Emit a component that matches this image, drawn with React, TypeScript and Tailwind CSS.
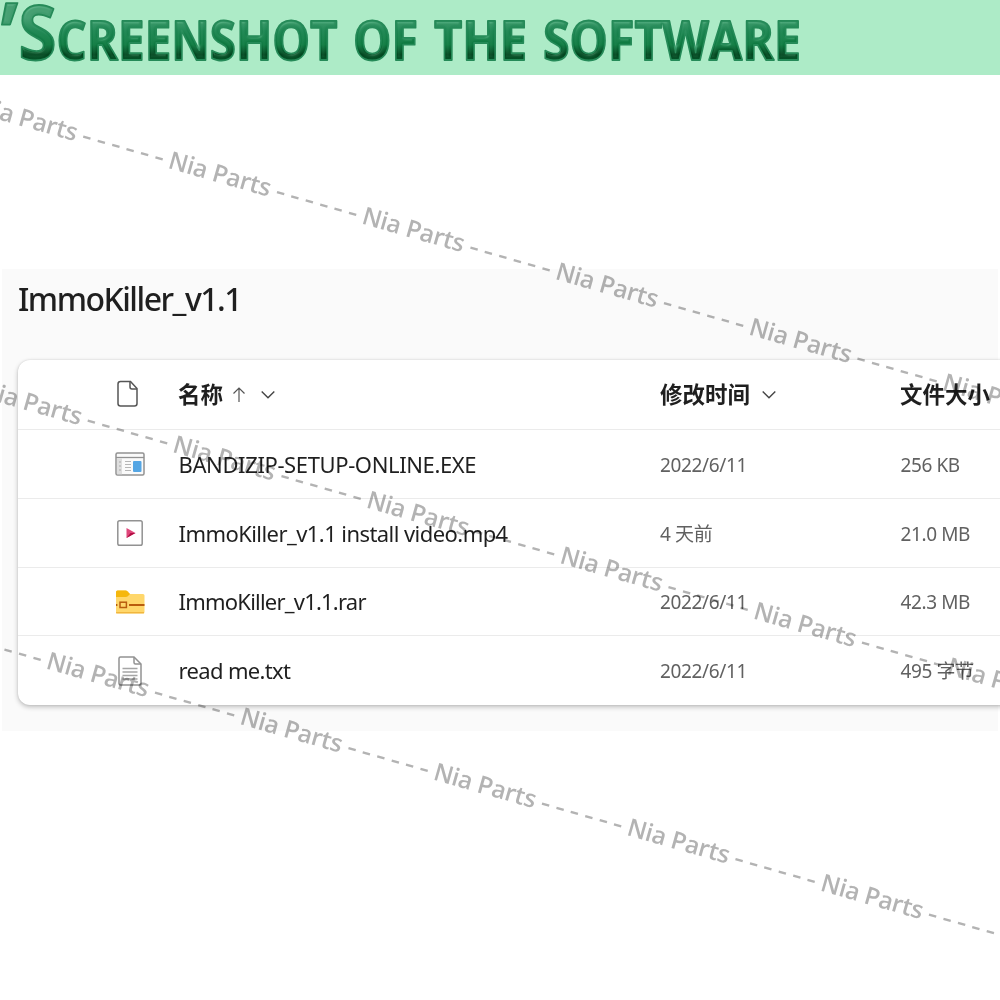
import React from "react";

const pitch = { x: 193.55, y: 55.5 };

const watermarkRows = [
  { x: -25.5, y: 112.5, count: 6 },
  { x: -21, y: 396.5, count: 6 },
  { x: -147.5, y: 613, count: 6 },
];

const titleWords = [
  { text: "S", x: 18.5, size: 76, width: 38 },
  { text: "CREENSHOT", x: 56.5, size: 54, width: 281 },
  { text: "OF", x: 353, size: 54, width: 65 },
  { text: "THE", x: 434, size: 54, width: 93 },
  { text: "SOFTWARE", x: 543, size: 54, width: 258 },
];

const files = [
  { name: "BANDIZIP-SETUP-ONLINE.EXE", date: "2022/6/11", size: "256 KB", icon: "exe", row: "h-[69px] border-b", track: "tracking-[-0.38px]" },
  { name: "ImmoKiller_v1.1 install video.mp4", date: "4 天前", size: "21.0 MB", icon: "video", row: "h-[69px] border-b", track: "tracking-[-0.56px]" },
  { name: "ImmoKiller_v1.1.rar", date: "2022/6/11", size: "42.3 MB", icon: "rar", row: "h-[68px] border-b", track: "tracking-[-0.78px]" },
  { name: "read me.txt", date: "2022/6/11", size: "495 字节", icon: "txt", row: "h-[69px]", track: "tracking-[-0.65px]" },
];

const FileIcon = ({ type }: { type: string }) => {
  if (type === "exe") {
    return (
      <svg width="30" height="24" viewBox="0 0 30 24" fill="none">
        <rect x="1" y="1" width="28" height="22" rx="1.5" fill="#fafafa" stroke="#929292" strokeWidth="1.5" />
        <path d="M1 5.5h28" stroke="#929292" strokeWidth="1.3" />
        <path d="M2 6.3h5v16H2z" fill="#dedede" />
        <path d="M4 10h2M4 14h2M4 18h2" stroke="#aaa" />
        <path d="M10 9.5h6M10 12.5h6M10 15.5h6M10 18.5h6" stroke="#b6b6b6" strokeWidth="1.2" />
        <rect x="18" y="9" width="8.5" height="11" rx="1" fill="#55a6e4" />
      </svg>
    );
  }
  if (type === "video") {
    return (
      <svg width="26" height="26" viewBox="0 0 26 26" fill="none">
        <rect x=".8" y=".8" width="24.4" height="24.4" rx="1.8" fill="#fff" stroke="#929292" strokeWidth="1.5" />
        <path d="M9.5 8v10l9-5z" fill="#df477b" />
        <path d="M9.5 18l9-5h-5z" fill="#b10e43" />
      </svg>
    );
  }
  if (type === "rar") {
    return (
      <svg width="30" height="24" viewBox="0 0 30 24" fill="none">
        <path d="M1 2q0-1.5 1.5-1.5h9L15 4h13q1.5 0 1.5 1.5V22q0 1.5-1.5 1.5H2.5Q1 23.5 1 22z" fill="#ffd76b" />
        <path d="M1 7V2Q1 .5 2.5.5h8q1 0 1.8.8L15 4l-2.2 2.2q-.8.8-2 .8z" fill="#f5b70d" />
        <path d="M1 22.8h28" stroke="#eba92c" />
        <path d="M1 15h1.4M14 15h15.5" stroke="#b95c0d" strokeWidth="2.2" />
        <rect x="5" y="12.2" width="6.4" height="5.3" stroke="#b95c0d" strokeWidth="1.5" />
      </svg>
    );
  }
  return (
    <svg width="24" height="30" viewBox="0 0 24 30" fill="none">
      <path d="M2.5 1H16l7 7v19.5q0 1.5-1.5 1.5h-19Q1 29 1 27.5v-25Q1 1 2.5 1z" fill="#fff" stroke="#929292" strokeWidth="1.5" />
      <path d="M16 1v5.5Q16 8 17.5 8H23" stroke="#929292" strokeWidth="1.5" />
      <path d="M4.5 12.5h15M4.5 16h15M4.5 19.5h15M4.5 23h15" stroke="#a5a5a5" strokeWidth="1.3" />
    </svg>
  );
};

const Chevron = () => (
  <svg width="16" height="10" viewBox="0 0 16 10" fill="none" stroke="#454545" strokeWidth="1.4">
    <path d="M1.7 1.5L8 7.8l6.3-6.3" />
  </svg>
);

const TitleComponent = () => (
  <header className="h-[75px] w-full bg-[#adebc7]">
    <svg width="1000" height="75" className="block font-['Open_Sans',sans-serif] font-bold">
      <defs>
        <linearGradient id="green" gradientUnits="userSpaceOnUse" x1="0" y1="18" x2="0" y2="61">
          <stop offset="0" stopColor="#409c6e" />
          <stop offset=".3" stopColor="#1b8450" />
          <stop offset=".62" stopColor="#0e7940" />
          <stop offset=".85" stopColor="#034720" />
          <stop offset="1" stopColor="#07572b" />
        </linearGradient>
        <filter id="bevel" x="-5%" y="-10%" width="110%" height="120%" colorInterpolationFilters="sRGB">
          <feGaussianBlur in="SourceAlpha" stdDeviation="1.8" result="blur" />
          <feSpecularLighting in="blur" surfaceScale="4" specularConstant=".25" specularExponent="16" lightingColor="#a8e6c4" result="light">
            <feDistantLight azimuth="250" elevation="40" />
          </feSpecularLighting>
          <feComposite in="light" in2="SourceAlpha" operator="in" result="edge" />
          <feMerge>
            <feMergeNode in="SourceGraphic" />
            <feMergeNode in="edge" />
          </feMerge>
        </filter>
      </defs>
      <g stroke="#258a58" strokeWidth="1.8" strokeLinejoin="round" fill="url(#green)" filter="url(#bevel)">
        <text transform="translate(0 63) skewX(-15)" x="-15.5" y="0" fontSize="84">
          '
        </text>
        {titleWords.map((word) => (
          <text key={word.text} x={word.x} y="59.5" fontSize={word.size} textLength={word.width} lengthAdjust="spacingAndGlyphs">
            {word.text}
          </text>
        ))}
      </g>
    </svg>
  </header>
);

const Watermark = () => (
  <svg
    width="1000"
    height="1000"
    className="pointer-events-none absolute top-0 left-0 font-['Open_Sans',sans-serif] font-semibold mix-blend-multiply"
    fill="#b3b3b3"
  >
    {watermarkRows.map((row) =>
      Array.from({ length: row.count }, (_, i) => (
        <g key={`${row.y}-${i}`} transform={`translate(${row.x + i * pitch.x} ${row.y + i * pitch.y}) rotate(16)`}>
          <text fontSize="24.5" textLength="105.5" x="-1">
            Nia Parts
          </text>
          <text fontSize="31" className="font-normal" x="110 125 140 155 170 185" y="1.5">
            ------
          </text>
        </g>
      ))
    )}
  </svg>
);

export default function App() {
  return (
    <main className="relative h-[1000px] w-[1000px] overflow-hidden bg-white font-['Noto_Sans','Noto_Sans_CJK_SC',sans-serif] text-[#1f1f1f]">
      <TitleComponent />
      <section className="mx-0.5 mt-[194px] h-[462px] bg-[#fafafa] pt-2 pl-4">
        <h1 className="h-[83px] text-[32px] leading-[44px] font-medium tracking-[-1.5px]">ImmoKiller_v1.1</h1>
        <div className="w-[1000px] rounded-xl bg-white shadow-[0_2px_5px_rgba(0,0,0,0.24),0_0_2px_rgba(0,0,0,0.12)]">
          <div className="grid h-[70px] grid-cols-[97px_63px_482px_240px_118px] items-center border-b border-[#ebebeb] text-[22.5px] font-bold">
            <span />
            <svg width="24" height="28" viewBox="0 0 24 28" fill="none" stroke="#555" strokeWidth="1.5" className="mb-0.5 ml-0.5">
              <path d="M3.5 1.5h10l6.5 7v15q0 2.5-2.5 2.5h-14Q1 26 1 23.5V4q0-2.5 2.5-2.5z" />
              <path d="M13 1.5V7q0 2 2 2h5" />
            </svg>
            <div className="flex items-center">
              <span>名称</span>
              <svg width="14" height="16" viewBox="0 0 14 16" fill="none" stroke="#555" strokeWidth="1.2" className="ml-[9px] mr-[14px]">
                <path d="M7 15V1M1.5 6.5L7 1l5.5 5.5" />
              </svg>
              <Chevron />
            </div>
            <div className="flex items-center gap-[11px]">
              <span>修改时间</span>
              <Chevron />
            </div>
            <span className="whitespace-nowrap">文件大小</span>
          </div>
          {files.map((file) => (
            <div key={file.name} className={"grid grid-cols-[97px_63.5px_481.5px_240.5px_117.5px] items-center border-[#ebebeb] " + file.row}>
              <span />
              <div className="flex w-[30px] justify-center">
                <FileIcon type={file.icon} />
              </div>
              <span className={"text-[22px] whitespace-nowrap " + file.track}>{file.name}</span>
              <span className="pt-0.5 text-[19px] tracking-[-0.35px] text-[#616161]">{file.date}</span>
              <span className="pt-0.5 text-[19px] tracking-[-0.4px] text-[#616161]">{file.size}</span>
            </div>
          ))}
        </div>
      </section>
      <Watermark />
    </main>
  );
}
